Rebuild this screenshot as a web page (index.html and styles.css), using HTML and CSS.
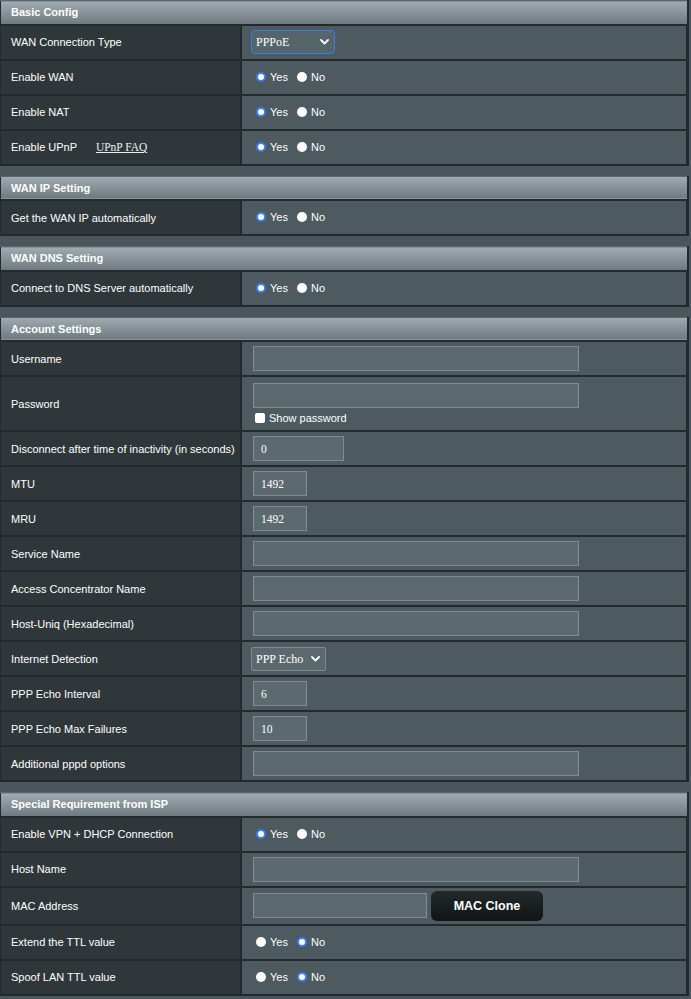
FILE: index.html
```html
<!DOCTYPE html>
<html lang="en">
<head>
    <meta charset="UTF-8">
    <title>WAN - Internet Connection</title>
    <link rel="stylesheet" href="styles.css">
</head>
<body>

    <!-- Basic Config -->
    <table class="form-table">
        <tr class="section"><td colspan="2">Basic Config</td></tr>
        <tr>
            <th>WAN Connection Type</th>
            <td>
                <span class="select-wrap">
                    <select class="select focused" style="width:84px">
                        <option>PPPoE</option>
                    </select>
                    <svg class="chevron" width="9" height="6" viewBox="0 0 9 6"><path d="M1 1l3.5 3.5L8 1" fill="none" stroke="#fff" stroke-width="1.8" stroke-linecap="round" stroke-linejoin="round"/></svg>
                </span>
            </td>
        </tr>
        <tr>
            <th>Enable WAN</th>
            <td><label class="radio"><input type="radio" name="wan" checked>Yes</label><label class="radio"><input type="radio" name="wan">No</label></td>
        </tr>
        <tr>
            <th>Enable NAT</th>
            <td><label class="radio"><input type="radio" name="nat" checked>Yes</label><label class="radio"><input type="radio" name="nat">No</label></td>
        </tr>
        <tr>
            <th>Enable UPnP <a class="faq" href="#">UPnP FAQ</a></th>
            <td><label class="radio"><input type="radio" name="upnp" checked>Yes</label><label class="radio"><input type="radio" name="upnp">No</label></td>
        </tr>
    </table>

    <!-- WAN IP Setting -->
    <table class="form-table">
        <tr class="section"><td colspan="2">WAN IP Setting</td></tr>
        <tr>
            <th>Get the WAN IP automatically</th>
            <td><label class="radio"><input type="radio" name="dhcp" checked>Yes</label><label class="radio"><input type="radio" name="dhcp">No</label></td>
        </tr>
    </table>

    <!-- WAN DNS Setting -->
    <table class="form-table">
        <tr class="section"><td colspan="2">WAN DNS Setting</td></tr>
        <tr>
            <th>Connect to DNS Server automatically</th>
            <td><label class="radio"><input type="radio" name="dns" checked>Yes</label><label class="radio"><input type="radio" name="dns">No</label></td>
        </tr>
    </table>

    <!-- Account Settings -->
    <table class="form-table">
        <tr class="section"><td colspan="2">Account Settings</td></tr>
        <tr>
            <th>Username</th>
            <td><input class="input-text long" type="text"></td>
        </tr>
        <tr class="tall">
            <th>Password</th>
            <td>
                <input class="input-text long" type="password">
                <label class="check"><input type="checkbox">Show password</label>
            </td>
        </tr>
        <tr>
            <th>Disconnect after time of inactivity (in seconds)</th>
            <td><input class="input-text mid" type="text" value="0"></td>
        </tr>
        <tr>
            <th>MTU</th>
            <td><input class="input-text short" type="text" value="1492"></td>
        </tr>
        <tr>
            <th>MRU</th>
            <td><input class="input-text short" type="text" value="1492"></td>
        </tr>
        <tr>
            <th>Service Name</th>
            <td><input class="input-text long" type="text"></td>
        </tr>
        <tr>
            <th>Access Concentrator Name</th>
            <td><input class="input-text long" type="text"></td>
        </tr>
        <tr>
            <th>Host-Uniq (Hexadecimal)</th>
            <td><input class="input-text long" type="text"></td>
        </tr>
        <tr>
            <th>Internet Detection</th>
            <td>
                <span class="select-wrap">
                    <select class="select" style="width:75px">
                        <option>PPP Echo</option>
                    </select>
                    <svg class="chevron" width="9" height="6" viewBox="0 0 9 6"><path d="M1 1l3.5 3.5L8 1" fill="none" stroke="#fff" stroke-width="1.8" stroke-linecap="round" stroke-linejoin="round"/></svg>
                </span>
            </td>
        </tr>
        <tr>
            <th>PPP Echo Interval</th>
            <td><input class="input-text short" type="text" value="6"></td>
        </tr>
        <tr>
            <th>PPP Echo Max Failures</th>
            <td><input class="input-text short" type="text" value="10"></td>
        </tr>
        <tr>
            <th>Additional pppd options</th>
            <td><input class="input-text long" type="text"></td>
        </tr>
    </table>

    <!-- Special Requirement from ISP -->
    <table class="form-table">
        <tr class="section"><td colspan="2">Special Requirement from ISP</td></tr>
        <tr>
            <th>Enable VPN + DHCP Connection</th>
            <td><label class="radio"><input type="radio" name="vpn" checked>Yes</label><label class="radio"><input type="radio" name="vpn">No</label></td>
        </tr>
        <tr>
            <th>Host Name</th>
            <td><input class="input-text long" type="text"></td>
        </tr>
        <tr class="mac-row">
            <th>MAC Address</th>
            <td><input class="input-text mac" type="text"><button class="button-clone">MAC Clone</button></td>
        </tr>
        <tr>
            <th>Extend the TTL value</th>
            <td><label class="radio"><input type="radio" name="ttl">Yes</label><label class="radio"><input type="radio" name="ttl" checked>No</label></td>
        </tr>
        <tr>
            <th>Spoof LAN TTL value</th>
            <td><label class="radio"><input type="radio" name="spoof">Yes</label><label class="radio"><input type="radio" name="spoof" checked>No</label></td>
        </tr>
    </table>

</body>
</html>
```

FILE: styles.css
```css
body {
    margin: 0;
    background-color: #4a565b;
    font-family: "Liberation Sans", Arial, sans-serif;
    font-size: 11px;
    color: #fff;
}
.form-table {
    width: 689px;
    border-collapse: collapse;
    margin-bottom: 10px;
}
.form-table tr {
    height: 35px;
}
.form-table tr.tall {
    height: 55px;
}
.form-table tr.mac-row {
    height: 38px;
}
.form-table .section {
    height: 24px;
}
.form-table .section td {
    padding: 0 10px;
    background: linear-gradient(#a0abb0, #6e7a7f);
    font-weight: bold;
    border: 2px solid #222a2d;
    border-top: 1px solid #5b676b;
    border-left: 1px solid #222a2d;
}
.form-table th {
    width: 229px;
    padding: 0 0 0 10px;
    text-align: left;
    font-weight: normal;
    white-space: nowrap;
    background-color: #2f373a;
    border: 2px solid #222a2d;
    border-left: 1px solid #222a2d;
}
.form-table td {
    padding: 0 10px;
    background-color: #4d5a5f;
    border: 2px solid #222a2d;
    border-right: 3px solid #222a2d;
}
.faq {
    margin-left: 16px;
    font-family: "Liberation Serif", "Times New Roman", serif;
    font-size: 11.5px;
    color: #eef1f2;
    text-decoration: underline;
}
.radio {
    display: inline-flex;
    align-items: center;
    margin-right: 5px;
}
.radio input {
    appearance: none;
    width: 10px;
    height: 10px;
    margin: 0 4px 0 4px;
    border-radius: 50%;
    background-color: #fff;
}
.radio input:checked {
    border: 2.5px solid #3b7cf3;
}
.check {
    display: flex;
    align-items: center;
    margin-top: 4px;
}
.check input {
    appearance: none;
    width: 10px;
    height: 10px;
    margin: 0 4px 0 3px;
    border-radius: 2px;
    background-color: #fff;
}
.input-text {
    box-sizing: border-box;
    height: 25px;
    margin: 0 0 0 1px;
    padding: 0 7px;
    background-color: #5c6a70;
    border: 1px solid #7f8c91;
    font-family: "Liberation Serif", "Times New Roman", serif;
    font-size: 11.5px;
    color: #fff;
    vertical-align: middle;
}
.input-text.long {
    width: 326px;
}
.input-text.mid {
    width: 91px;
}
.input-text.short {
    width: 54px;
}
.input-text.mac {
    width: 174px;
}
.select-wrap {
    position: relative;
    display: inline-block;
    vertical-align: middle;
}
.select {
    appearance: none;
    box-sizing: border-box;
    height: 24px;
    margin: 0 0 0 -1px;
    padding: 0 20px 0 4px;
    background-color: #5b696e;
    border: 1px solid #7e8b90;
    border-radius: 2px;
    font-family: "Liberation Serif", "Times New Roman", serif;
    font-size: 12px;
    color: #fff;
    display: block;
}
.select.focused {
    border: 1.5px solid #3c7bf0;
    border-radius: 4px;
    background-color: #56656a;
}
.chevron {
    position: absolute;
    right: 6px;
    top: 9px;
    pointer-events: none;
}
.button-clone {
    height: 30px;
    width: 112px;
    margin-left: 4px;
    vertical-align: middle;
    background: linear-gradient(#23292b, #101415);
    border: none;
    border-radius: 6px;
    font-family: "Liberation Sans", Arial, sans-serif;
    font-size: 12.5px;
    font-weight: bold;
    color: #fff;
}
```
